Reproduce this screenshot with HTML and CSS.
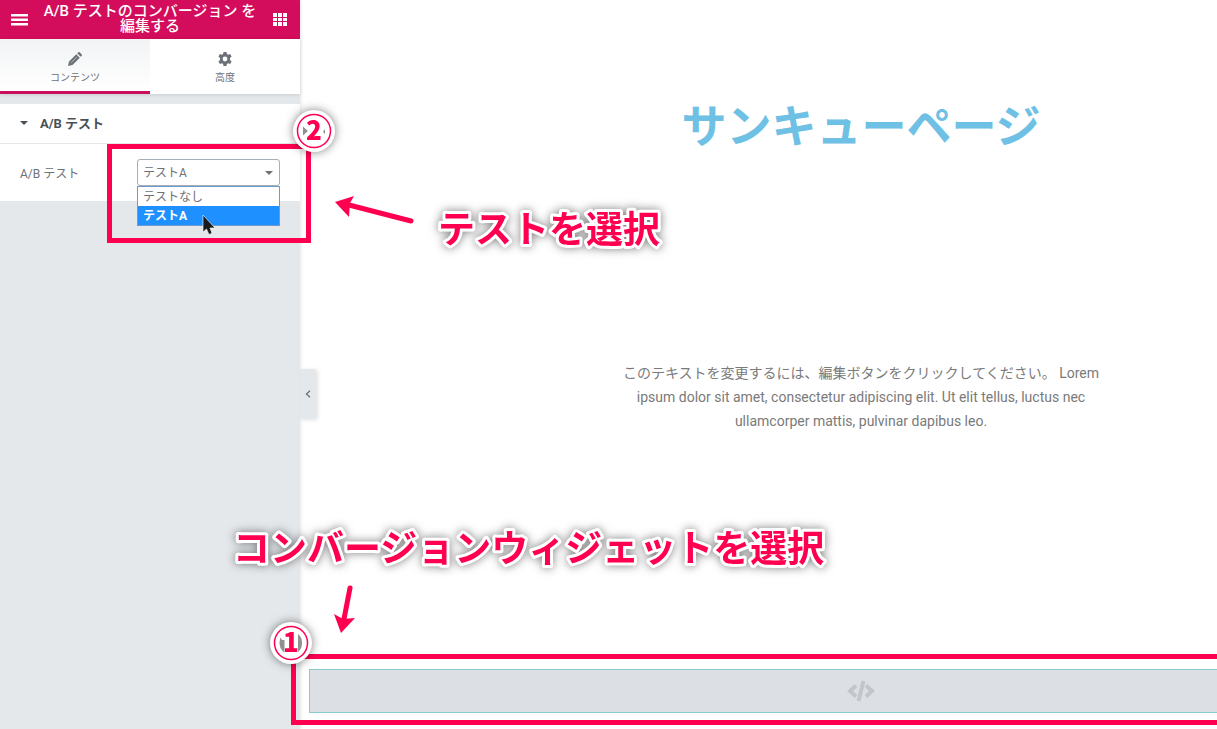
FILE: index.html
```html
<!DOCTYPE html>
<html lang="ja">
<head>
    <meta charset="UTF-8">
    <meta name="viewport" content="width=device-width, initial-scale=1.0">
    <title>A/B テストのコンバージョン を編集する</title>
    <link rel="stylesheet" href="styles.css">
</head>
<body>
    <div class="editor">
        <aside class="panel">
            <header class="panel-header">
                <button class="icon-button" type="button" aria-label="メニュー">
                    <svg width="18" height="12" viewBox="0 0 18 12"><path d="M0 0h17v2.500H0zM0 4.500h17V7H0zM0 9h17v2.500H0z" fill="#fff"/></svg>
                </button>
                <h1 class="panel-title">A/B テストのコンバージョン を編集する</h1>
                <button class="icon-button" type="button" aria-label="ウィジェット">
                    <svg width="14" height="14" viewBox="0 0 14 14"><path d="M0 0h4v4H0zM5 0h4v4H5zM10 0h4v4h-4zM0 5h4v3H0zM5 5h4v3H5zM10 5h4v3h-4zM0 9h4v4H0zM5 9h4v4H5zM10 9h4v4h-4z" fill="#fff"/></svg>
                </button>
            </header>

            <nav class="tabs">
                <button class="tab active" type="button">
                    <svg width="14" height="14" viewBox="0 0 14 14"><path d="M0 14l1-4.500L8.300 2.200l3.500 3.500L4.500 13zM9.200 1.300L10.100.4c.6-.5 1.200-.5 1.700 0l1.800 1.800c.5.5.5 1.200 0 1.700l-.9.9z" fill="#6d7278"/><path d="M3 10.800L9 4.800" stroke="#b5babf" stroke-width="1"/></svg>
                    <span>コンテンツ</span>
                </button>
                <button class="tab" type="button">
                    <svg width="14" height="14" viewBox="0 0 14 14"><path fill-rule="evenodd" fill="#6d7278" d="M5.500 0h3l.4 2 1.200.7 2-.7 1.500 2.600-1.600 1.300v2.200l1.600 1.300-1.500 2.600-2-.7-1.200.7-.4 2h-3l-.4-2-1.200-.7-2 .7L.4 9.400 2 8.100V5.900L.4 4.600 1.900 2l2 .7L5.100 2zM7 4.600a2.400 2.400 0 1 0 0 4.800 2.400 2.400 0 0 0 0-4.800z"/></svg>
                    <span>高度</span>
                </button>
            </nav>

            <section class="section">
                <h2 class="section-title">A/B テスト</h2>
                <div class="control">
                    <label for="abTest">A/B テスト</label>
                    <div class="select-wrap">
                        <select id="abTest">
                            <option>テストなし</option>
                            <option selected>テストA</option>
                        </select>
                        <ul class="options" role="listbox" aria-label="A/B テスト">
                            <li role="option">テストなし</li>
                            <li class="selected" role="option" aria-selected="true">テストA</li>
                        </ul>
                        <svg class="cursor" width="14" height="20" viewBox="0 0 14 20"><path d="M1 0v17l3.500-3 2.500 5.500 3-1.300L8 13h5z" fill="#1a1a1a" stroke="#fff" stroke-width=".6"/></svg>
                    </div>
                </div>
            </section>

            <button class="collapse" type="button" aria-label="パネルを閉じる">
                <svg width="6" height="8" viewBox="0 0 6 8"><path d="M5 .8L1.500 4 5 7.200" fill="none" stroke="#6d7278" stroke-width="1.300"/></svg>
            </button>
        </aside>

        <main class="preview">
            <div class="canvas">
                <h2 class="page-heading">サンキューページ</h2>
                <p class="page-text">このテキストを変更するには、編集ボタンをクリックしてください。 Lorem ipsum dolor sit amet, consectetur adipiscing elit. Ut elit tellus, luctus nec ullamcorper mattis, pulvinar dapibus leo.</p>
                <div class="widget">
                    <svg width="28" height="22" viewBox="0 0 28 22" fill="none" stroke="#c2c6c9"><path d="M9 5.500L3 11l6 5.500M19 5.500l6 5.500-6 5.500" stroke-width="4"/><path d="M16.500 1l-5 20" stroke-width="4"/></svg>
                </div>
            </div>
        </main>

        <!-- annotations -->
        <div class="frame frame-select"></div>
        <div class="frame frame-widget"></div>
        <svg class="badge badge-two" width="42" height="42" viewBox="0 0 42 42">
            <circle cx="21" cy="21" r="21" fill="#fff"/>
            <circle cx="21" cy="21" r="16.500" fill="none" stroke="#ff0050" stroke-width="1.500"/>
            <path d="M10 16.500v9l5-4.500zM32 19v5l-2-2z" fill="#909090"/>
            <text x="21" y="30">2</text>
        </svg>
        <svg class="badge badge-one" width="42" height="42" viewBox="0 0 42 42">
            <circle cx="21" cy="21" r="21" fill="#fff"/>
            <circle cx="21" cy="21" r="16.500" fill="none" stroke="#ff0050" stroke-width="1.500"/>
            <path d="M10.500 15.500q-2 5.500 0 10.500 1.500 3 4 4.500V18h-2.500zM28 12v18q4-3 4-9t-4-9z" fill="#909090"/>
            <text x="21" y="30">1</text>
        </svg>
        <svg class="note note-test" width="230" height="50"><text x="3" y="40">テストを選択</text></svg>
        <svg class="note note-widget" width="600" height="50"><text x="3" y="40">コンバージョンウィジェットを選択</text></svg>
        <svg class="arrow arrow-test" width="82" height="32" viewBox="0 0 82 32"><path d="M15 11l62 16" stroke="#ff0050" stroke-width="5" stroke-linecap="round"/><path d="M1 8l19-6-4 7-1 14z" fill="#ff0050"/></svg>
        <svg class="arrow arrow-widget" width="24" height="50" viewBox="0 0 24 50"><path d="M17 4l-6 31" stroke="#ff0050" stroke-width="5" stroke-linecap="round"/><path d="M8 49L1 30l9 5 12-1z" fill="#ff0050"/></svg>
    </div>
</body>
</html>
```
FILE: styles.css
```css
*,
*::before,
*::after {
    box-sizing: border-box;
}

body {
    margin: 0;
    font-family: Roboto, "Noto Sans CJK JP", sans-serif;
    background-color: #fff;
    color: #6d7278;
}

button {
    border: 0;
    padding: 0;
    background: none;
    font-family: inherit;
    color: inherit;
    cursor: pointer;
}

svg {
    display: block;
}

.editor {
    position: relative;
    display: flex;
    min-height: 100vh;
    overflow: hidden;
}

/* left panel */
.panel {
    position: relative;
    z-index: 1;
    flex: 0 0 300px;
    background-color: #e4e8eb;
    box-shadow: 0 0 4px rgba(0, 0, 0, 0.15);
}

.panel-header {
    display: flex;
    align-items: center;
    height: 39px;
    background-color: #d30c5c;
}

.icon-button {
    display: flex;
    flex: 0 0 40px;
    justify-content: center;
}

.panel-title {
    flex: 1;
    margin: 0;
    padding-bottom: 2px;
    color: #fff;
    font-size: 15px;
    font-weight: 500;
    line-height: 15px;
    text-align: center;
}

.tabs {
    display: flex;
    height: 55px;
    background-color: #fff;
    box-shadow: 0 1px 4px rgba(0, 0, 0, 0.12);
}

.tab {
    display: flex;
    flex: 1;
    flex-direction: column;
    align-items: center;
    justify-content: center;
    gap: 4px;
    padding-top: 6px;
    border-bottom: 3px solid transparent;
    font-size: 10px;
    line-height: 15px;
}

.tab.active {
    background: linear-gradient(#f2f3f5, #fff);
    border-bottom-color: #c8105c;
}

.section {
    margin-top: 10px;
    background-color: #fff;
}

.section-title {
    display: flex;
    align-items: center;
    gap: 12px;
    height: 40px;
    margin: 0;
    padding: 0 20px 2px;
    border-bottom: 1px solid #e4e8ec;
    color: #495157;
    font-size: 13px;
    font-weight: 700;
}

.section-title::before {
    content: "";
    border: 4px solid transparent;
    border-top-color: #495157;
    border-bottom: 0;
}

.control {
    display: flex;
    align-items: center;
    justify-content: space-between;
    padding: 15px 20px;
    font-size: 12px;
}

.select-wrap {
    position: relative;
    width: 143px;
}

.select-wrap::after {
    content: "";
    position: absolute;
    top: 12px;
    right: 7px;
    border: 4px solid transparent;
    border-top-color: #6d7278;
    border-bottom: 0;
}

select {
    display: block;
    width: 100%;
    height: 27px;
    padding: 0 5px;
    border: 1px solid #a4afb7;
    border-radius: 3px;
    background-color: #fff;
    color: inherit;
    font-family: inherit;
    font-size: 12px;
    appearance: none;
}

.options {
    position: absolute;
    top: 27px;
    left: 0;
    width: 100%;
    margin: 0;
    padding: 0;
    border: 1px solid #6f9ac9;
    background-color: #fff;
    list-style: none;
    line-height: 18px;
}

.options li {
    padding: 1px 5px 0;
}

.options .selected {
    background-color: #1e90ff;
    color: #fff;
    font-weight: 700;
}

.cursor {
    position: absolute;
    top: 56px;
    left: 65px;
}

.collapse {
    position: absolute;
    top: 369px;
    left: 100%;
    display: flex;
    align-items: center;
    justify-content: center;
    width: 16px;
    height: 50px;
    border-radius: 0 3px 3px 0;
    background-color: #e4e8eb;
    box-shadow: 2px 1px 4px rgba(0, 0, 0, 0.12);
}

/* page preview, runs past the right edge of the window */
.preview {
    flex: 1;
    min-width: 0;
}

.canvas {
    width: calc(100% + 205px);
    padding: 105px 9px 16px;
    text-align: center;
}

.page-heading {
    margin: 0;
    color: #6ec1e4;
    font-size: 45px;
    font-weight: 700;
    line-height: 45px;
}

.page-text {
    max-width: 500px;
    margin: 211px auto 236px;
    color: #7a7a7a;
    font-size: 14px;
    line-height: 24px;
}

.widget {
    display: flex;
    align-items: center;
    justify-content: center;
    height: 44px;
    border: 1px solid #8accce;
    background-color: #dcdfe4;
}

/* annotations */
.frame,
.badge,
.note,
.arrow {
    position: absolute;
    z-index: 2;
    overflow: visible;
}

.frame {
    border: 5px solid #ff0050;
}

.frame-select {
    top: 144px;
    left: 107px;
    width: 204px;
    height: 99px;
}

.frame-widget {
    top: 654px;
    left: 291px;
    right: -10px;
    height: 71px;
}

.badge,
.note {
    fill: #ff0050;
    font-family: "Noto Sans CJK JP", sans-serif;
    font-weight: 700;
    filter: drop-shadow(0 0 5px rgba(0, 0, 0, 0.5));
}

.badge text {
    font-size: 26px;
    font-weight: 900;
    text-anchor: middle;
}

.badge-two {
    top: 110px;
    left: 293px;
}

.badge-one {
    top: 622px;
    left: 270px;
}

.note text {
    font-size: 37px;
    stroke: #fff;
    stroke-width: 6px;
    stroke-linejoin: round;
    paint-order: stroke;
}

.note-test {
    top: 203px;
    left: 435px;
}

.note-widget {
    top: 522px;
    left: 230px;
}

.arrow-test {
    top: 194px;
    left: 334px;
}

.arrow-widget {
    top: 584px;
    left: 333px;
}
```
